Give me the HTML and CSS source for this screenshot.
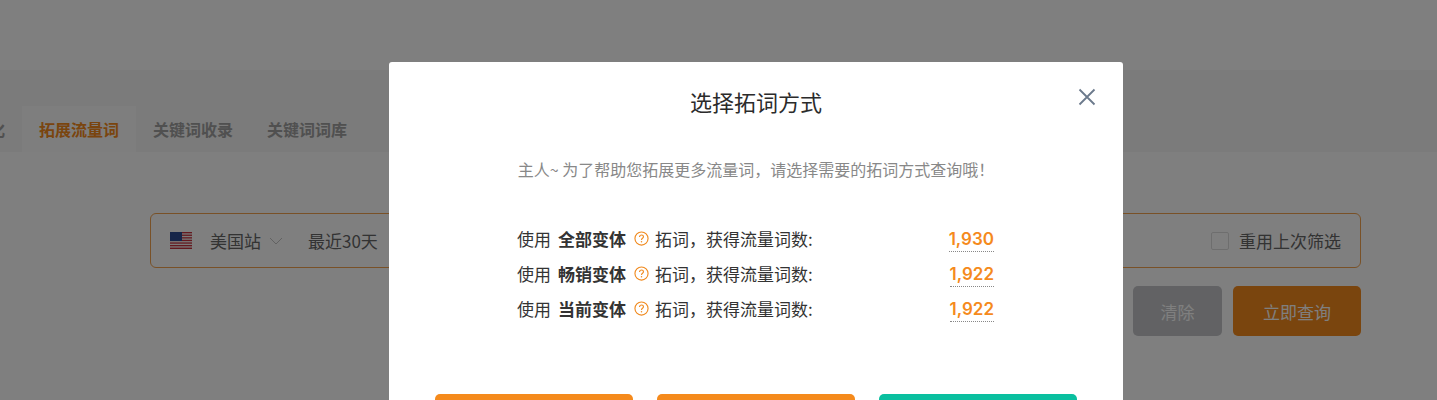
FILE: index.html
```html
<!DOCTYPE html>
<html lang="zh-CN">
<head>
    <meta charset="UTF-8">
    <title>选择拓词方式</title>
    <link rel="stylesheet" href="styles.css">
</head>
<body>

<div class="page">
    <div class="tabs">
        <div class="tab tab-cut">化</div>
        <div class="tab active">拓展流量词</div>
        <div class="tab">关键词收录</div>
        <div class="tab">关键词词库</div>
    </div>
    <div class="search-box">
        <svg class="flag" viewBox="0 0 22 17">
            <rect width="22" height="17" fill="#f4f4f4"/>
            <rect y="0" width="22" height="1.3" fill="#c8333f"/>
            <rect y="2.6" width="22" height="1.3" fill="#c8333f"/>
            <rect y="5.2" width="22" height="1.3" fill="#c8333f"/>
            <rect y="7.8" width="22" height="1.3" fill="#c8333f"/>
            <rect y="10.4" width="22" height="1.3" fill="#c8333f"/>
            <rect y="13" width="22" height="1.3" fill="#c8333f"/>
            <rect y="15.6" width="22" height="1.4" fill="#c8333f"/>
            <rect width="12" height="9" fill="#2c4a92"/>
        </svg>
        <span class="site">美国站</span>
        <svg class="chevron" viewBox="0 0 14 8"><path d="M1 1l6 6 6-6" fill="none" stroke="#c4c4c4" stroke-width="1"/></svg>
        <span class="range">最近30天</span>
        <label class="reuse"><span class="check"></span>重用上次筛选</label>
    </div>
    <div class="actions">
        <button class="btn btn-clear">清除</button>
        <button class="btn btn-query">立即查询</button>
    </div>
</div>

<div class="mask"></div>

<div class="modal">
    <h2>选择拓词方式</h2>
    <svg class="close" viewBox="0 0 18 18"><path d="M1.500 1.500l15 15M16.500 1.500l-15 15" fill="none" stroke="#6c7a8c" stroke-width="1.8"/></svg>
    <p class="hint">主人~ 为了帮助您拓展更多流量词，请选择需要的拓词方式查询哦！</p>
    <div class="rows">
        <div class="row">
            <span class="row-label">使用<b>全部变体</b><svg class="help" viewBox="0 0 16 16"><circle cx="8" cy="8" r="7" fill="none" stroke="#f0891c" stroke-width="1.200"/><path d="M5.900 6.300c0-1.200 1-2 2.100-2s2.100.8 2.100 1.900c0 1.600-2.100 1.600-2.100 3.300" fill="none" stroke="#f0891c" stroke-width="1.200"/><circle cx="8" cy="11.500" r=".8" fill="#f0891c"/></svg>拓词，获得流量词数:</span>
            <span class="num">1,930</span>
        </div>
        <div class="row">
            <span class="row-label">使用<b>畅销变体</b><svg class="help" viewBox="0 0 16 16"><circle cx="8" cy="8" r="7" fill="none" stroke="#f0891c" stroke-width="1.200"/><path d="M5.900 6.300c0-1.200 1-2 2.100-2s2.100.8 2.100 1.900c0 1.600-2.100 1.600-2.100 3.300" fill="none" stroke="#f0891c" stroke-width="1.200"/><circle cx="8" cy="11.500" r=".8" fill="#f0891c"/></svg>拓词，获得流量词数:</span>
            <span class="num">1,922</span>
        </div>
        <div class="row">
            <span class="row-label">使用<b>当前变体</b><svg class="help" viewBox="0 0 16 16"><circle cx="8" cy="8" r="7" fill="none" stroke="#f0891c" stroke-width="1.200"/><path d="M5.900 6.300c0-1.200 1-2 2.100-2s2.100.8 2.100 1.900c0 1.600-2.100 1.600-2.100 3.300" fill="none" stroke="#f0891c" stroke-width="1.200"/><circle cx="8" cy="11.500" r=".8" fill="#f0891c"/></svg>拓词，获得流量词数:</span>
            <span class="num">1,922</span>
        </div>
    </div>
    <div class="modal-btns">
        <button class="modal-btn orange"></button>
        <button class="modal-btn orange"></button>
        <button class="modal-btn green"></button>
    </div>
</div>

</body>
</html>
```
FILE: styles.css
```css
html, body {
    margin: 0;
    height: 400px;
    overflow: hidden;
}

body {
    font-family: "Noto Sans CJK SC", "Noto Sans", sans-serif;
    background-color: #fff;
    color: #333;
}

.page {
    padding-top: 70px;
}

.tabs {
    display: flex;
    height: 82px;
    background-color: #f6f6f6;
    padding-top: 36px;
    box-sizing: border-box;
}

.tab {
    height: 46px;
    line-height: 47px;
    padding: 0 17px;
    font-size: 16px;
    font-weight: 700;
    color: #a0a0a0;
    box-sizing: border-box;
}

.tab-cut {
    margin-left: -11px;
    padding-left: 0;
}

.tab.active {
    background-color: #fcfcfc;
    color: #f58a1c;
}

.search-box {
    display: flex;
    align-items: center;
    width: 1211px;
    height: 55px;
    margin: 61px 0 0 150px;
    padding: 0 19px;
    border: 1px solid #f2a24e;
    border-radius: 6px;
    box-sizing: border-box;
    font-size: 17px;
    color: #666;
}

.flag {
    width: 22px;
    height: 17px;
}

.site {
    margin-left: 18px;
}

.chevron {
    width: 14px;
    height: 8px;
    margin-left: 8px;
}

.range {
    margin-left: 25px;
}

.reuse {
    display: flex;
    align-items: center;
    margin-left: auto;
}

.check {
    width: 16px;
    height: 16px;
    margin-right: 10px;
    border: 1px solid #ddd;
    border-radius: 2px;
}

.actions {
    display: flex;
    justify-content: flex-end;
    gap: 11px;
    width: 1211px;
    margin: 18px 0 0 150px;
}

.btn {
    height: 50px;
    border: none;
    border-radius: 5px;
    color: #fff;
    font-family: inherit;
    font-size: 17px;
}

.btn-clear {
    width: 89px;
    background-color: #c4c5c8;
}

.btn-query {
    width: 128px;
    background-color: #f58a1c;
}

.mask {
    position: fixed;
    inset: 0;
    background-color: rgba(0, 0, 0, 0.5);
}

.modal {
    position: fixed;
    top: 62px;
    left: 389px;
    width: 734px;
    height: 420px;
    background-color: #fff;
    border-radius: 3px;
    padding: 0 46px;
    box-sizing: border-box;
}

h2 {
    margin: 22px 0 0;
    text-align: center;
    font-size: 22px;
    line-height: 34px;
    font-weight: 400;
    color: #2b2b2b;
}

.close {
    position: absolute;
    top: 26px;
    right: 27px;
    width: 18px;
    height: 18px;
}

.hint {
    margin: 39px 0 0;
    text-align: center;
    font-size: 16px;
    line-height: 24px;
    color: #888;
}

.rows {
    margin: 40px 0 0 82px;
    width: 477px;
}

.row {
    display: flex;
    justify-content: space-between;
    align-items: center;
    height: 35px;
    font-size: 17px;
    color: #333;
}

.row-label {
    display: flex;
    align-items: center;
}

.row-label b {
    margin-left: 7px;
}

.help {
    width: 15px;
    height: 15px;
    margin: 0 6px 0 8px;
}

.num {
    margin-top: 2px;
    font-family: "Inter", sans-serif;
    font-weight: 600;
    font-size: 17px;
    color: #f58a1c;
    border-bottom: 1px dotted #888;
    line-height: 24px;
}

.modal-btns {
    display: flex;
    gap: 24px;
    margin-top: 68px;
}

.modal-btn {
    width: 198px;
    height: 50px;
    border: none;
    border-radius: 5px;
}

.orange {
    background-color: #f58a1c;
}

.green {
    background-color: #0abf9f;
}
```
